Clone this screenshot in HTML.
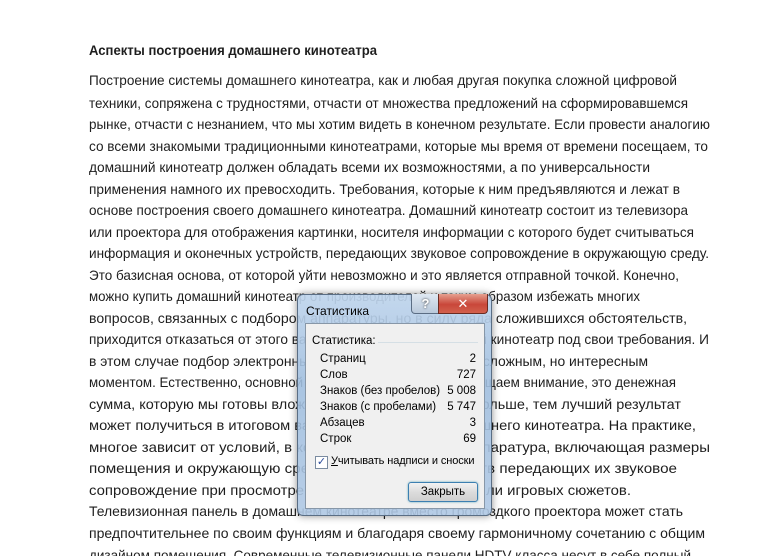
<!DOCTYPE html>
<html><head><meta charset="utf-8"><style>
body{margin:0;width:760px;height:556px;background:#fff;overflow:hidden;position:relative;font-family:"Liberation Sans","DejaVu Sans",sans-serif}
svg.doc{position:absolute;left:0;top:0}
svg.doc text{font-family:"Liberation Sans",sans-serif;font-size:14px;fill:#1e1e1e}
.dlg{position:absolute;left:297px;top:294px;width:195px;height:222px;border-radius:6px;border:1px solid #5a6e85;box-sizing:border-box;
background:linear-gradient(180deg,rgba(190,212,236,.92) 0%,rgba(160,190,222,.9) 40%,rgba(175,200,228,.9) 100%);box-shadow:0 0 8px rgba(0,0,0,.45)}
.ttl{position:absolute;left:8px;top:9px;font-size:12px;color:#000}
.help{position:absolute;left:113px;top:-1px;width:27px;height:19px;border:1px solid #5b6d84;border-top:none;border-radius:0 0 0 4px;background:linear-gradient(#dfe8f2,#b9c9db);color:#fff;font-weight:bold;font-size:13px;text-align:center;line-height:19px;text-shadow:0 0 2px #333}
.close{position:absolute;left:140px;top:-1px;width:48px;height:19px;border:1px solid #6b2b22;border-top:none;border-radius:0 0 4px 0;background:linear-gradient(#e6a08f,#c9473a 55%,#d2614d);color:#fff;font-weight:bold;font-size:13px;text-align:center;line-height:19px}
.in{position:absolute;left:7px;top:28px;width:180px;height:186px;background:#f0f0f0;border:1px solid #8797a8;box-sizing:border-box;font-size:11.5px;color:#000}
.in .h{position:absolute;left:6px;top:11px}
.in .ln{position:absolute;left:72px;top:18px;width:100px;border-top:1px solid #d5dfe5}
.row{position:absolute;left:14px;width:156px}
.row span{position:absolute;right:0}
.cb{position:absolute;left:9px;top:132px;width:11px;height:11px;border:1px solid #7a8ba0;background:#fff;font-size:11px;line-height:11px;color:#2a4a9a;text-align:center}
.cbt{position:absolute;left:25px;top:131px;font-size:11px;letter-spacing:-0.1px}
.btn{position:absolute;left:102px;top:158px;width:70px;height:20px;box-sizing:border-box;border:1px solid #3c7fb1;border-radius:3px;background:linear-gradient(#f2f2f2,#dcdcdc 50%,#cfcfcf);text-align:center;line-height:18px;box-shadow:0 0 2px #6ab}
</style></head><body>
<svg class="doc" width="760" height="556">
<text x="89" y="55" font-weight="bold" textLength="288" lengthAdjust="spacingAndGlyphs">Аспекты построения домашнего кинотеатра</text>
<text x="89" y="85" textLength="588" lengthAdjust="spacingAndGlyphs">Построение системы  домашнего кинотеатра, как и любая другая покупка сложной цифровой</text>
<text x="89" y="108" textLength="599" lengthAdjust="spacingAndGlyphs">техники, сопряжена с трудностями, отчасти от множества предложений на сформировавшемся</text>
<text x="89" y="129" textLength="621" lengthAdjust="spacingAndGlyphs">рынке, отчасти с незнанием, что мы хотим видеть в конечном результате. Если провести аналогию</text>
<text x="89" y="151" textLength="619" lengthAdjust="spacingAndGlyphs">со всеми знакомыми традиционными кинотеатрами, которые мы время от времени посещаем, то</text>
<text x="89" y="172" textLength="561" lengthAdjust="spacingAndGlyphs">домашний кинотеатр должен обладать всеми их возможностями, а по универсальности</text>
<text x="89" y="194" textLength="591" lengthAdjust="spacingAndGlyphs">применения намного  их превосходить.  Требования, которые к ним предъявляются и лежат в</text>
<text x="89" y="215" textLength="599" lengthAdjust="spacingAndGlyphs">основе построения своего домашнего кинотеатра. Домашний кинотеатр состоит из телевизора</text>
<text x="89" y="237" textLength="605" lengthAdjust="spacingAndGlyphs">или проектора для отображения картинки, носителя информации с которого будет считываться</text>
<text x="89" y="258" textLength="620" lengthAdjust="spacingAndGlyphs">информация и оконечных устройств, передающих звуковое сопровождение в окружающую среду.</text>
<text x="89" y="280" textLength="590" lengthAdjust="spacingAndGlyphs">Это базисная основа, от которой уйти невозможно и это является отправной точкой. Конечно,</text>
<text x="89" y="301" textLength="551" lengthAdjust="spacingAndGlyphs">можно купить домашний кинотеатр от производителей и таким образом избежать многих</text>
<text x="89" y="323" textLength="598" lengthAdjust="spacingAndGlyphs">вопросов, связанных с подбором аппаратуры, но в силу ряда сложившихся  обстоятельств,</text>
<text x="89" y="344" textLength="620" lengthAdjust="spacingAndGlyphs">приходится отказаться от этого варианта и собрать домашний кинотеатр под свои требования. И</text>
<text x="89" y="366" textLength="559" lengthAdjust="spacingAndGlyphs">в этом случае подбор электронных компонентов становится сложным, но интересным</text>
<text x="89" y="387" textLength="587" lengthAdjust="spacingAndGlyphs">моментом. Естественно, основной момент, на который мы обращаем внимание, это денежная</text>
<text x="89" y="409" textLength="592" lengthAdjust="spacingAndGlyphs">сумма, которую мы  готовы вложить в систему, и чем она больше, тем лучший результат</text>
<text x="89" y="430" textLength="607" lengthAdjust="spacingAndGlyphs">может получиться в итоговом варианте построения домашнего кинотеатра. На практике,</text>
<text x="89" y="452" textLength="621" lengthAdjust="spacingAndGlyphs">многое зависит от условий, в которых будет работать аппаратура, включающая размеры</text>
<text x="89" y="473" textLength="588" lengthAdjust="spacingAndGlyphs">помещения и окружающую среду, размещения устройств передающих их звуковое</text>
<text x="89" y="495" textLength="542" lengthAdjust="spacingAndGlyphs">сопровождение при просмотре фильмов, музыкальных или игровых сюжетов.</text>
<text x="89" y="516" textLength="594" lengthAdjust="spacingAndGlyphs">Телевизионная панель в домашнем кинотеатре вместо громоздкого проектора может стать</text>
<text x="89" y="538" textLength="616" lengthAdjust="spacingAndGlyphs">предпочтительнее по своим функциям и благодаря своему гармоничному сочетанию с общим</text>
<text x="89" y="560" textLength="602" lengthAdjust="spacingAndGlyphs">дизайном помещения. Современные телевизионные панели HDTV класса несут в себе полный</text>
</svg>
<div class="dlg">
<div class="ttl">Статистика</div>
<div class="help">?</div><div class="close">✕</div>
<div class="in">
<div class="h">Статистика:</div><div class="ln"></div>
<div class="row" style="top:29px">Страниц<span>2</span></div>
<div class="row" style="top:45px">Слов<span>727</span></div>
<div class="row" style="top:61px">Знаков (без пробелов)<span>5 008</span></div>
<div class="row" style="top:77px">Знаков (с пробелами)<span>5 747</span></div>
<div class="row" style="top:93px">Абзацев<span>3</span></div>
<div class="row" style="top:109px">Строк<span>69</span></div>
<div class="cb">✓</div><div class="cbt"><u>У</u>читывать надписи и сноски</div>
<div class="btn">Закрыть</div>
</div>
</div>
</body></html>
